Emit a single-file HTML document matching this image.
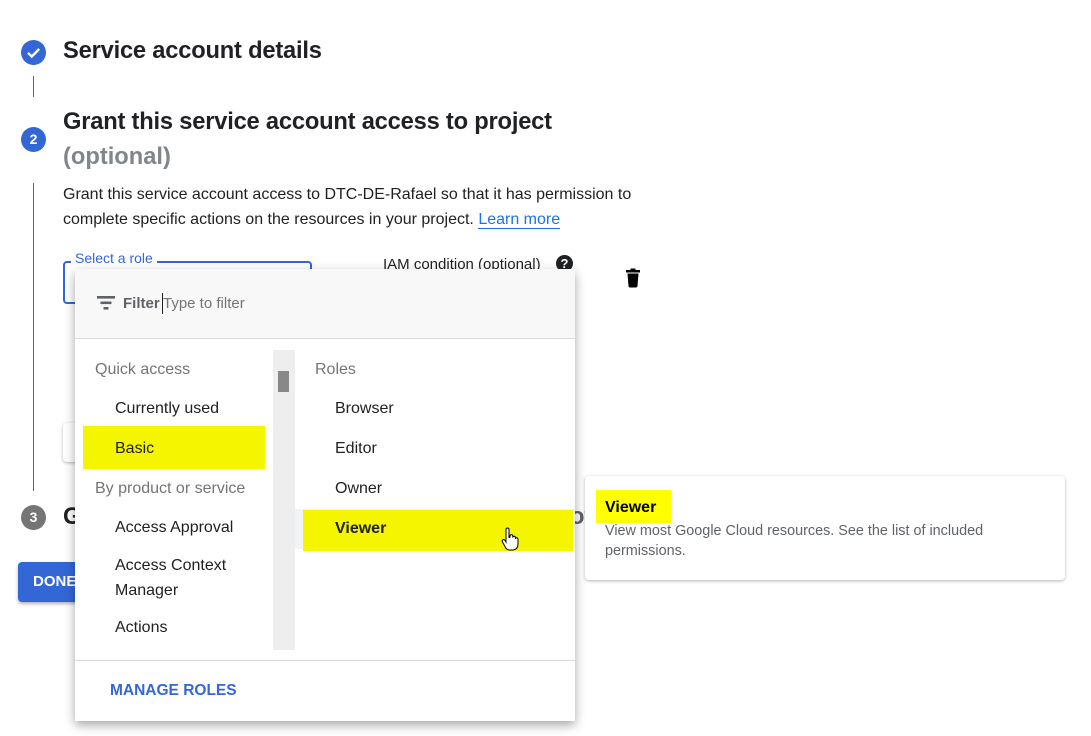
<!DOCTYPE html>
<html><head><meta charset="utf-8"><style>
*{margin:0;padding:0;box-sizing:border-box}
body{width:1091px;height:736px;background:#fff;font-family:"Liberation Sans",Arial,sans-serif;color:#202124;position:relative;overflow:hidden}
.a{position:absolute;white-space:nowrap}
.circ{position:absolute;border-radius:50%;color:#fff;font-weight:bold;font-size:14px;text-align:center;line-height:25px;width:25px;height:25px}
.vl{position:absolute;width:1px;background:#5f6368;left:33px}
.it{position:absolute;font-size:16px;color:#202124;white-space:nowrap}
.hd{position:absolute;font-size:16px;color:#757575;white-space:nowrap}
</style></head><body>
<div class="circ" style="left:21px;top:40px;background:#3367d6">
<svg width="25" height="25" viewBox="0 0 25 25" style="position:absolute;left:0;top:0"><path d="M7 12.8l3.8 3.8L18.2 9" fill="none" stroke="#fff" stroke-width="2.4"/></svg></div>
<div class="a" style="left:63px;top:38px;font-size:23.7px;font-weight:bold;color:#202124;letter-spacing:-0.2px">Service account details</div>
<div class="vl" style="top:76px;height:21px"></div>
<div class="circ" style="left:21px;top:127px;background:#3367d6">2</div>
<div class="a" style="left:63px;top:109px;font-size:23.7px;font-weight:bold;letter-spacing:-0.2px">Grant this service account access to project</div>
<div class="a" style="left:63px;top:144px;font-size:23.7px;font-weight:bold;color:#80868b">(optional)</div>
<div class="vl" style="top:183px;height:308px"></div>
<div class="a" style="left:63px;top:182px;font-size:16px;line-height:25px">Grant this service account access to DTC-DE-Rafael so that it has permission to<br>complete specific actions on the resources in your project. <span style="color:#1a73e8;border-bottom:1px solid #1a73e8">Learn more</span></div>
<div class="a" style="left:63px;top:261px;width:249px;height:43px;border:2px solid #3367d6;border-radius:4px"></div>
<div class="a" style="left:71px;top:250px;background:#fff;padding:0 4px;font-size:14px;color:#3367d6">Select a role</div>
<div class="a" style="left:383px;top:256px;font-size:15px;color:#202124">IAM condition (optional)</div>
<div class="a" style="left:556px;top:255px;width:17px;height:17px;border-radius:50%;background:#202124;color:#fff;font-size:13px;font-weight:bold;text-align:center;line-height:17px">?</div>
<svg class="a" style="left:625px;top:268px" width="16" height="20" viewBox="0 0 16 20"><rect x="1" y="2" width="14" height="2.5" fill="#000"/><rect x="5.5" y="0.5" width="5" height="2" fill="#000"/><path d="M2.5 5.5h11l-1 12.5q-0.2 1.5-1.7 1.5H5.2q-1.5 0-1.7-1.5z" fill="#000"/></svg>
<div class="a" style="left:63px;top:423px;width:20px;height:39px;border-radius:4px;box-shadow:0 1px 3px rgba(0,0,0,.3)"></div>
<div class="circ" style="left:21px;top:505px;background:#757575">3</div>
<div class="a" style="left:63px;top:504px;font-size:23.7px;font-weight:bold">G</div>
<div class="a" style="left:570px;top:504px;font-size:23.7px;font-weight:bold;color:#5f6368">ot</div>
<div class="a" style="left:18px;top:562px;width:80px;height:40px;background:#3367d6;border-radius:4px;box-shadow:0 2px 3px rgba(0,0,0,.3);color:#fff;font-size:15px;font-weight:bold;line-height:40px;padding-left:15px">DONE</div>

<!-- dropdown -->
<div class="a" style="left:75px;top:269px;width:500px;height:452px;background:#fff;box-shadow:0 4px 10px rgba(0,0,0,.35)">
 <div class="a" style="left:0;top:0;width:500px;height:70px;background:#f8f8f8;border-bottom:1px solid #dadce0"></div>
 <svg class="a" style="left:22px;top:27px" width="18" height="14" viewBox="0 0 18 14"><rect x="0" y="0" width="18" height="2.6" fill="#5f6368"/><rect x="3.5" y="5.5" width="11" height="2.6" fill="#5f6368"/><rect x="6.5" y="11" width="5" height="2.6" fill="#5f6368"/></svg>
 <div class="a" style="left:48px;top:26px;font-size:15px;font-weight:bold;color:#5f6368">Filter</div>
 <div class="a" style="left:87px;top:24px;width:1px;height:21px;background:#202124"></div>
 <div class="a" style="left:88px;top:26px;font-size:15px;color:#757575">Type to filter</div>
 <div class="a" style="left:198px;top:81px;width:22px;height:300px;background:#eee"></div>
 <div class="a" style="left:203px;top:102px;width:11px;height:21px;background:#888"></div>
 <div class="a" style="left:220px;top:240px;width:280px;height:40px;background:#f1f3f4"></div>
 <div class="a" style="left:8px;top:157px;width:182px;height:43px;background:#f5f500"></div>
 <div class="a" style="left:228px;top:241px;width:270px;height:41px;background:#f5f500"></div>
 <div class="hd" style="left:20px;top:92px">Quick access</div>
 <div class="it" style="left:40px;top:131px">Currently used</div>
 <div class="it" style="left:40px;top:171px">Basic</div>
 <div class="hd" style="left:20px;top:211px">By product or service</div>
 <div class="it" style="left:40px;top:250px">Access Approval</div>
 <div class="it" style="left:40px;top:288px">Access Context</div>
 <div class="it" style="left:40px;top:313px">Manager</div>
 <div class="it" style="left:40px;top:350px">Actions</div>
 <div class="hd" style="left:240px;top:92px">Roles</div>
 <div class="it" style="left:260px;top:131px">Browser</div>
 <div class="it" style="left:260px;top:171px">Editor</div>
 <div class="it" style="left:260px;top:211px">Owner</div>
 <div class="it" style="left:260px;top:251px;font-weight:bold">Viewer</div>
 <svg class="a" style="left:426px;top:258px" width="18" height="24" viewBox="0 0 18 24"><path d="M5 2.5q0-1.5 1.5-1.5T8 2.5v8l1-.2V9q0-1.4 1.4-1.4T11.8 9v1.6q0-1.3 1.3-1.3t1.3 1.3v1.3q0-1.2 1.2-1.2T17 12v5q0 5-4.5 6H8.5Q6 23 4.5 20.5L1.5 15q-.8-1.5.4-2.2t2.3.8L5 15z" fill="#fff" stroke="#000" stroke-width="1"/></svg>
 <div class="a" style="left:0;top:391px;width:500px;height:1px;background:#dadce0"></div>
 <div class="a" style="left:35px;top:413px;font-size:15.5px;font-weight:bold;color:#3367d6">MANAGE ROLES</div>
</div>

<!-- tooltip -->
<div class="a" style="left:585px;top:476px;width:480px;height:104px;background:#fff;border-radius:4px;box-shadow:0 1px 3px rgba(0,0,0,.3)">
 <div class="a" style="left:11px;top:14px;width:75px;height:33px;background:#ffff00"></div>
 <div class="a" style="left:20px;top:23px;font-size:16px;font-weight:bold;color:#000">Viewer</div>
 <div class="a" style="left:20px;top:45px;font-size:14.4px;line-height:20px;color:#5f6368">View most Google Cloud resources. See the list of included<br>permissions.</div>
</div>
</body></html>
